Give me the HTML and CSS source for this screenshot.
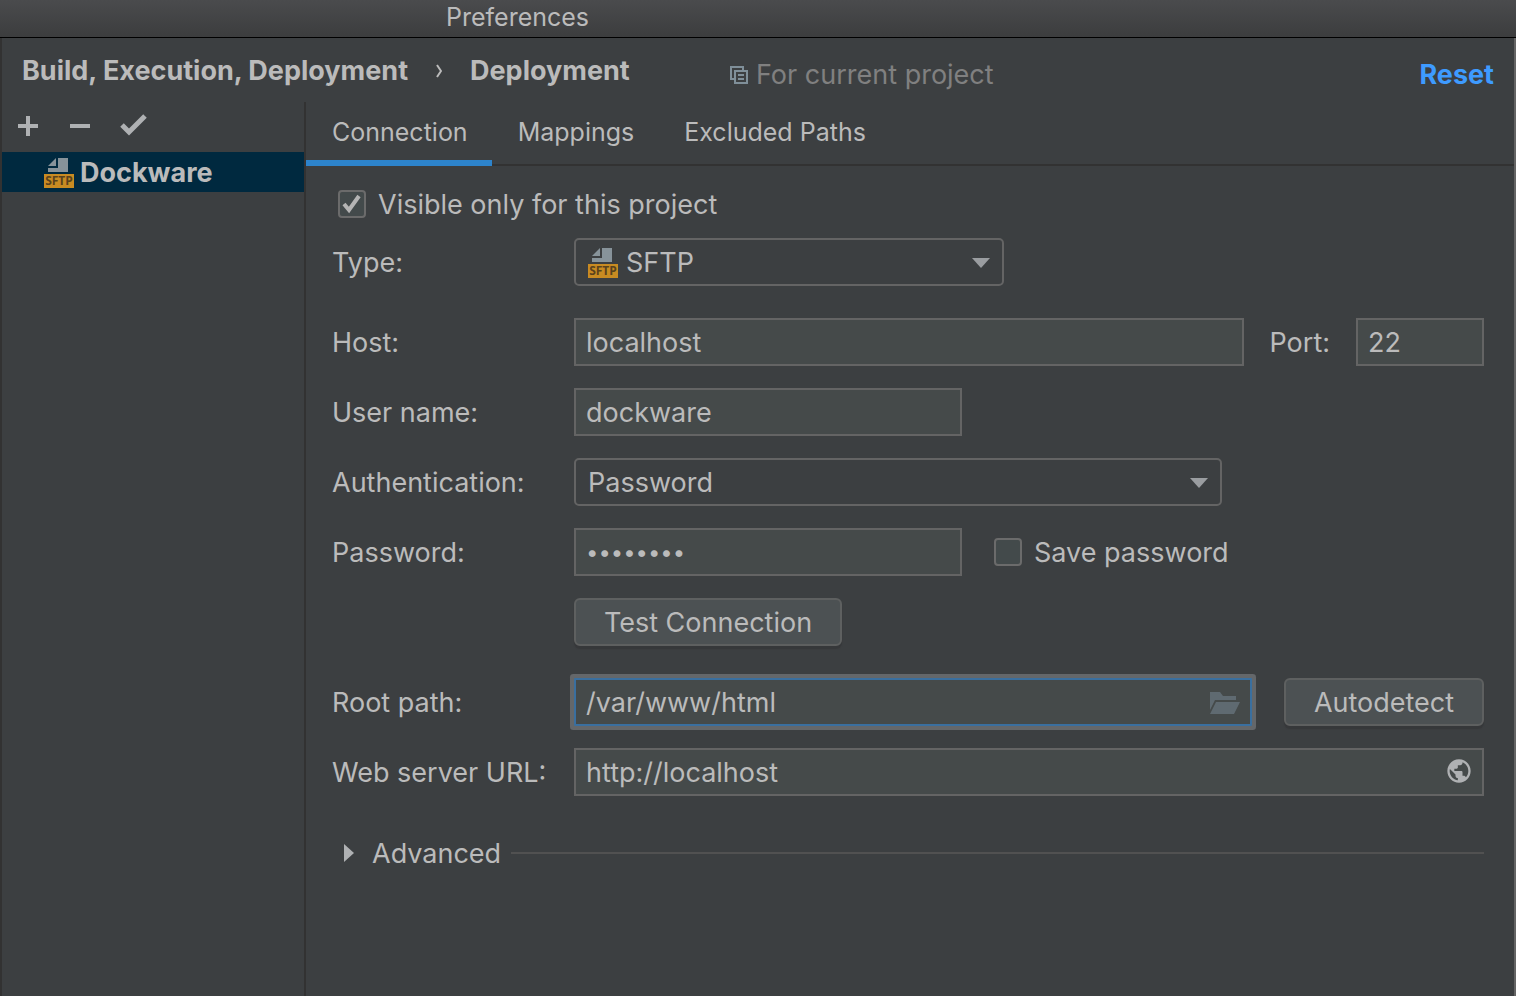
FILE: index.html
```html
<!DOCTYPE html>
<html lang="en">
<head>
<meta charset="utf-8">
<title>Preferences</title>
<link rel="stylesheet" href="styles.css">
</head>
<body>
<div class="window">
  <header class="titlebar"><h1 class="title">Preferences</h1></header>
  <div class="body">
    <div class="heading">
      <nav class="crumbs" aria-label="Breadcrumb">
        <span>Build, Execution, Deployment</span>
        <svg class="chevron" viewBox="0 0 6 14"><path d="M1 1L5 7L1 13" fill="none" stroke="#bbb" stroke-width="2"/></svg>
        <span>Deployment</span>
      </nav>
      <div class="scope">
        <svg class="scope-icon" viewBox="0 0 18 18"><path fill="none" stroke="#7f8f99" stroke-width="2" d="M4 13H1V1H13V4M5 5H17V17H5ZM8 9H14M8 13H14"/></svg>
        <span>For current project</span>
      </div>
      <a class="reset" href="#">Reset</a>
    </div>
    <div class="columns">
      <aside class="sidebar">
        <div class="tools">
          <button class="tool" aria-label="Add"><svg viewBox="0 0 28 28"><path stroke="#afb1b3" stroke-width="4" d="M4 14H24M14 4V24"/></svg></button>
          <button class="tool" aria-label="Remove"><svg viewBox="0 0 28 28"><path stroke="#afb1b3" stroke-width="4" d="M4 14H24"/></svg></button>
          <button class="tool" aria-label="Use as default"><svg class="tick" viewBox="0 0 28 28"><path fill="none" stroke="#afb1b3" stroke-width="5" d="M4 13L11 20L27 4"/></svg></button>
        </div>
        <div class="server">
          <svg class="sftp-icon" viewBox="0 0 30 30">
            <path fill="#87939a" d="M12 0V8H4ZM14 0H24V14H4V10H14Z"/>
            <path fill="#c88b22" d="M0 16H30V30H0Z"/>
            <text class="badge-text" x="15" y="27" text-anchor="middle">SFTP</text>
          </svg>
          <span>Dockware</span>
        </div>
      </aside>
      <main class="main">
        <div class="tabs" role="tablist">
          <button class="tab active" role="tab" aria-selected="true">Connection</button>
          <button class="tab" role="tab">Mappings</button>
          <button class="tab" role="tab">Excluded Paths</button>
        </div>
        <form class="form">
          <label class="check visible">
            <span class="box"><input type="checkbox" checked><svg viewBox="0 0 28 28"><path fill="none" stroke="#b4b4b4" stroke-width="4" d="M6 14L11 20L21 6"/></svg></span>
            <span class="caption">Visible only for this project</span>
          </label>
          <div class="row spaced">
            <label class="caption" for="type">Type:</label>
            <div class="select type">
              <select id="type"><option>SFTP</option></select>
              <svg class="sftp-icon lead" viewBox="0 0 30 30">
                <path fill="#87939a" d="M12 0V8H4ZM14 0H24V14H4V10H14Z"/>
                <path fill="#c88b22" d="M0 16H30V30H0Z"/>
                <text class="badge-text" x="15" y="27" text-anchor="middle">SFTP</text>
              </svg>
              <svg class="arrow" viewBox="0 0 18 10"><path fill="#9a9da0" d="M0 0H18L9 10Z"/></svg>
            </div>
          </div>
          <div class="row">
            <label class="caption" for="host">Host:</label>
            <div class="controls">
              <input class="field grow" id="host" type="text" value="localhost">
              <label class="caption" for="port">Port:</label>
              <input class="field port" id="port" type="text" value="22">
            </div>
          </div>
          <div class="row">
            <label class="caption" for="user">User name:</label>
            <input class="field medium" id="user" type="text" value="dockware">
          </div>
          <div class="row">
            <label class="caption" for="auth">Authentication:</label>
            <div class="select auth">
              <select id="auth"><option>Password</option></select>
              <svg class="arrow" viewBox="0 0 18 10"><path fill="#9a9da0" d="M0 0H18L9 10Z"/></svg>
            </div>
          </div>
          <div class="row">
            <label class="caption" for="pass">Password:</label>
            <div class="controls wide">
              <input class="field medium secret" id="pass" type="password" value="dockware">
              <label class="check">
                <span class="box"><input type="checkbox"></span>
                <span class="caption">Save password</span>
              </label>
            </div>
          </div>
          <div class="row spaced">
            <span></span>
            <button class="button test" type="button">Test Connection</button>
          </div>
          <div class="row">
            <label class="caption" for="root">Root path:</label>
            <div class="controls wide">
              <div class="with-icon grow">
                <input class="field focused" id="root" type="text" value="/var/www/html">
                <svg class="folder" viewBox="0 0 30 22"><path fill="#5f6a71" d="M0 0H10L13 4H26V8H5L0 18ZM6 10H30L24 22H0Z"/></svg>
              </div>
              <button class="button auto" type="button">Autodetect</button>
            </div>
          </div>
          <div class="row spaced">
            <label class="caption" for="url">Web server URL:</label>
            <div class="with-icon">
              <input class="field" id="url" type="text" value="http://localhost">
              <svg class="globe" viewBox="0 0 24 24"><path fill="#afb1b3" d="M12 2C6.48 2 2 6.48 2 12s4.48 10 10 10 10-4.48 10-10S17.52 2 12 2zm-1 17.93c-3.95-.49-7-3.85-7-7.93 0-.62.08-1.21.21-1.79L9 15v1c0 1.1.9 2 2 2v1.93zm6.9-2.54c-.26-.81-1-1.39-1.9-1.39h-1v-3c0-.55-.45-1-1-1H8v-2h2c.55 0 1-.45 1-1V7h2c1.1 0 2-.9 2-2v-.41c2.93 1.19 5 4.06 5 7.41 0 2.08-.8 3.97-2.1 5.39z"/></svg>
            </div>
          </div>
          <button class="advanced" type="button" aria-expanded="false">
            <svg viewBox="0 0 10 18"><path fill="#afb1b3" d="M0 0L10 9L0 18Z"/></svg>
            <span class="caption">Advanced</span>
            <span class="rule"></span>
          </button>
        </form>
      </main>
    </div>
  </div>
</div>
</body>
</html>
```

FILE: styles.css
```css
* { box-sizing: border-box; }

body {
  margin: 0;
  background: #3c3f41;
  color: #bbbbbb;
  font: 27px/32px Inter, "Liberation Sans", sans-serif;
}

button, input, select { font: inherit; color: inherit; margin: 0; }
button { padding: 0; border: 0; background: none; }
svg { display: block; flex: none; }

.badge-text { font: bold 12px "Open Sans", sans-serif; fill: #5a421c; }

.window { display: flex; flex-direction: column; min-height: 100vh; }

.titlebar {
  height: 38px;
  padding-left: 446px;
  border-bottom: 1px solid #000;
  background: linear-gradient(#4a4b4d, #3c3d3e);
}
.title { margin: 0; font-size: 25px; font-weight: 400; line-height: 34px; }

.body {
  flex: 1;
  display: flex;
  flex-direction: column;
  border-left: 2px solid #323232;
  border-right: 2px solid #646464;
}

.heading {
  display: flex;
  height: 64px;
  padding: 17px 20px 0 20px;
}
.crumbs { display: flex; gap: 28px; font-weight: 700; width: 707px; }
.chevron { width: 6px; height: 14px; margin-top: 9px; }
.scope { display: flex; gap: 8px; margin-top: 4px; color: #808080; }
.scope-icon { width: 18px; height: 18px; margin-top: 7px; margin-left: 1px; }
.reset {
  margin: 4px 0 0 auto;
  color: #3e9bff;
  font-weight: 700;
  text-decoration: none;
}

.columns { flex: 1; display: grid; grid-template-columns: 304px 1fr; }

.sidebar { border-right: 2px solid #323232; }
.tools { display: flex; gap: 24px; height: 50px; padding: 8px 12px 10px; }
.tool svg { width: 28px; height: 28px; overflow: visible; }
.server {
  display: flex;
  align-items: center;
  gap: 6px;
  height: 40px;
  padding: 2px 0 0 42px;
  background: #00293f;
  font-weight: 700;
}
.sftp-icon { width: 30px; height: 30px; }

.tabs { display: flex; height: 64px; border-bottom: 2px solid #323232; }
.tab { height: 64px; padding: 0 24px 4px 26px; font-size: 25px; }
.tab.active { padding-bottom: 0; border-bottom: 6px solid #2d84cc; border-top: 2px solid transparent; }

.form {
  display: flex;
  flex-direction: column;
  gap: 22px;
  padding: 22px 30px 0 26px;
}

.row { display: grid; grid-template-columns: 242px 1fr; align-items: center; }
.row.spaced { margin-bottom: 10px; }
.caption { padding-top: 2px; }
.controls { display: flex; align-items: center; gap: 26px; }
.controls.wide { gap: 32px; }
.grow { flex: 1; min-width: 0; }

.check { display: flex; align-items: center; gap: 12px; height: 32px; }
.check.visible { padding-left: 6px; margin-bottom: -4px; }
.box { display: grid; width: 28px; height: 28px; }
.box > * { grid-area: 1 / 1; width: 28px; height: 28px; pointer-events: none; }
.box input {
  appearance: none;
  border: 2px solid #6b6b6b;
  border-radius: 4px;
  background: #434a4b;
  pointer-events: auto;
}

.field {
  width: 100%;
  height: 48px;
  padding: 0 10px;
  border: 2px solid #646464;
  border-radius: 0;
  background: #454a4a;
  outline: none;
}
.field.grow { width: auto; }
.field.port { width: 128px; }
.field.medium { width: 388px; }
.field.secret { font-size: 22px; }
.field.focused { border-color: #3a6f9f; box-shadow: 0 0 0 4px #64676a; border-radius: 1px; }

.select { position: relative; max-width: 100%; }
.select.type { width: 430px; }
.select.auth { width: 648px; }
.select select {
  appearance: none;
  width: 100%;
  height: 48px;
  padding: 2px 48px 0 12px;
  border: 2px solid #646464;
  border-radius: 5px;
  background: #3c3f41;
  outline: none;
}
.select.type select { padding-left: 50px; }
.lead, .arrow { position: absolute; pointer-events: none; }
.lead { left: 14px; top: 10px; }
.arrow { right: 14px; top: 20px; width: 18px; height: 10px; }

.button {
  height: 48px;
  padding-top: 2px;
  border: 2px solid #5e6060;
  border-radius: 6px;
  background: #4c5153;
  box-shadow: 0 3px 1px #36383a;
}
.button.test { width: 268px; }
.button.auto { width: 200px; }

.with-icon { position: relative; }
.with-icon .field { display: block; padding-right: 50px; }
.folder, .globe { position: absolute; }
.folder { right: 12px; top: 14px; width: 30px; height: 22px; }
.globe { right: 11px; top: 9px; width: 28px; height: 28px; }

.advanced { display: flex; align-items: center; padding-left: 12px; margin-top: 8px; }
.advanced svg { width: 10px; height: 18px; margin-right: 18px; }
.rule { flex: 1; height: 2px; margin-left: 10px; background: #515151; }
```
